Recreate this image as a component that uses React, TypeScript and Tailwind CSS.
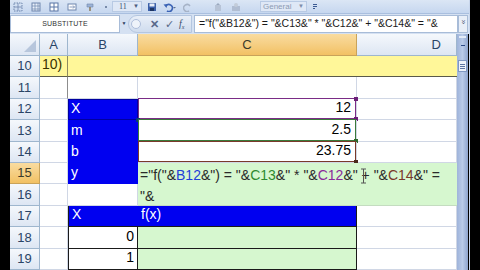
import React from 'react';

const font = { fontFamily: '"Liberation Sans", Arial, sans-serif' };

const hdr =
  'flex items-center justify-center border-r border-b border-[#9eb6ce] bg-linear-to-b from-[#f5f8fc] to-[#dde6f3] text-[13px] text-[#2a4466]';
const hdrOn =
  'flex items-center justify-center border-r border-b border-[#c9a35a] bg-linear-to-b from-[#f9dca0] to-[#f2c163] text-[13px] text-[#3b3b2a]';
const cell = 'flex items-end px-[3px] pb-[1px] border-r border-b border-[#d0d7e5] bg-white text-[14px] text-black';

const ToolIcon: React.FC<{ children: React.ReactNode; w?: number }> = ({ children, w = 10 }) => (
  <svg width={w} height="10" viewBox={`0 0 ${w} 10`} className="shrink-0">
    {children}
  </svg>
);

const Toolbar: React.FC = () => (
  <div className="h-[14px] flex items-center bg-linear-to-b from-[#dbe6f5] to-[#c6d7ef] border-b border-[#a9bfdf]">
    <div className="w-[2px]" />
    <div className="flex items-center gap-[8px] pl-[1px]">
      <ToolIcon>
        <rect x="1" y="1" width="8" height="8" fill="none" stroke="#6e86ad" strokeDasharray="1.5 1" />
        <path d="M5 1v8M1 5h8" stroke="#6e86ad" strokeWidth="0.8" />
      </ToolIcon>
      <ToolIcon>
        <rect x="1" y="1" width="8" height="8" fill="#eaf0fa" stroke="#6e86ad" />
        <path d="M4 1v8M7 1v8M1 4h8M1 7h8" stroke="#6e86ad" strokeWidth="0.7" />
      </ToolIcon>
      <ToolIcon>
        <rect x="1" y="1" width="8" height="8" fill="#fff" stroke="#5b76a6" />
        <path d="M5 1v8M1 5h8" stroke="#5b76a6" strokeWidth="1" />
      </ToolIcon>
      <ToolIcon>
        <rect x="1" y="2" width="8" height="6" fill="#fff" stroke="#6e86ad" />
        <path d="M2.5 5h5M6 3.5l1.5 1.5L6 6.5" stroke="#6e86ad" strokeWidth="0.8" fill="none" />
      </ToolIcon>
      <ToolIcon>
        <path d="M2 2h6v3H2z" fill="#9cb3d6" stroke="#6e86ad" strokeWidth="0.6" />
        <path d="M5 5v4" stroke="#8a7a5a" strokeWidth="1.5" />
      </ToolIcon>
      <ToolIcon w={6}>
        <circle cx="3" cy="5" r="1" fill="#5b6f90" />
      </ToolIcon>
    </div>
    <div className="ml-[3px] w-[30px] h-[11px] flex items-center justify-between pl-[6px] pr-[2px] bg-[#dfe8f6] border border-[#b8cae4] text-[8px] text-[#3c4f70]">
      <span className="font-['Liberation_Serif']">11</span>
      <span className="text-[6px] text-[#4a5d80]">▼</span>
    </div>
    <div className="ml-[5px] flex items-center gap-[6px]">
      <ToolIcon>
        <rect x="1" y="1" width="8" height="8" rx="0.5" fill="#3a5fa8" />
        <rect x="2.5" y="1.5" width="5" height="3" fill="#e8eef8" />
        <rect x="3" y="6" width="4" height="3" fill="#1d3563" />
      </ToolIcon>
      <ToolIcon w={14}>
        <path d="M3 4 a3.5 3.5 0 1 1 1 5" fill="none" stroke="#3b63b5" strokeWidth="1.6" />
        <path d="M0.5 2.5 L4.5 2 L3.5 6 Z" fill="#3b63b5" />
        <path d="M10 5 l1.5 1.5 l1.5 -1.5" fill="#5b6f90" />
      </ToolIcon>
      <ToolIcon>
        <path d="M7 4 a3.5 3.5 0 1 0 -1 5" fill="none" stroke="#a6b3c7" strokeWidth="1.5" />
      </ToolIcon>
    </div>
    <div className="ml-[20px] flex items-center gap-[8px]">
      <ToolIcon>
        <rect x="2" y="3" width="6" height="6" fill="#b7c3d6" />
        <path d="M3 3 l2 -2 l2 2" fill="#9aa8be" />
      </ToolIcon>
      <ToolIcon>
        <rect x="1" y="4" width="8" height="5" fill="#b0bdd2" />
        <circle cx="5" cy="3" r="2" fill="#c3ccd9" />
      </ToolIcon>
    </div>
    <div className="ml-[19px] w-[47px] h-[11px] flex items-center justify-between pl-[2px] pr-[2px] bg-[#dfe8f6] border border-[#b8cae4] text-[8px] text-[#8c9ab2]">
      <span>General</span>
      <span className="text-[6px] text-[#7d8daa]">▼</span>
    </div>
    <div className="ml-[6px] flex flex-col gap-[1px]">
      <div className="w-[4px] h-[1px] bg-[#3c5a92]" />
      <div className="w-[4px] h-[1px] bg-[#3c5a92]" />
      <div className="w-[2px] h-[1px] bg-[#3c5a92]" />
    </div>
  </div>
);

const FormulaBar: React.FC = () => (
  <div className="h-[20px] flex items-center bg-[#d5e1f2]">
    <div className="w-[110px] h-[18px] ml-0 flex items-center justify-center bg-white border border-[#a8bcd8] text-[7px] text-[#303030] tracking-[0.2px]">
      SUBSTITUTE
    </div>
    <div className="w-[8px] flex justify-center text-[5px] text-[#2d3d5c]">▼</div>
    <div className="w-[64px] h-[18px] flex items-center rounded-l-[9px] bg-linear-to-b from-[#e9eff8] to-[#cfdcee] border border-[#b4c6e0]">
      <div className="w-[10px] h-[10px] ml-[2px] rounded-full border border-[#aebedb] bg-[#eef3fa]" />
      <span className="ml-[9px] text-[11px] leading-none text-[#58698a] font-bold">✕</span>
      <span className="ml-[6px] text-[11px] leading-none text-[#58698a]">✓</span>
      <span className="ml-[5px] text-[10px] leading-none italic text-[#3e4e6c] font-['Liberation_Serif']">
        f<sub className="text-[6px]">x</sub>
      </span>
    </div>
    <div className="flex-1 h-[18px] ml-[2px] flex items-center pl-[4px] bg-white border border-[#a8bcd8] text-[10.5px] text-[#1a1a1a] whitespace-nowrap overflow-hidden">
      ="f("&amp;B12&amp;") = "&amp;C13&amp;" * "&amp;C12&amp;" + "&amp;C14&amp;" = "&amp;
    </div>
    <div className="w-[10px] h-[18px] flex items-start justify-center bg-[#e9eff8] border border-[#a8bcd8] text-[8px] leading-[12px] text-[#3e4e6c]">
      <span className="rotate-90 inline-block">»</span>
    </div>
    <div className="w-[1px]" />
  </div>
);

const Ref: React.FC<{ color: string; dot?: string }> = ({ color, dot }) => (
  <>
    <div className="absolute inset-x-0 -top-px -bottom-0 border pointer-events-none" style={{ borderColor: color }} />
    {dot && (
      <div className="absolute -right-[2px] -bottom-[2px] w-[4px] h-[4px]" style={{ background: dot }} />
    )}
  </>
);

const Grid: React.FC = () => (
  <div className="grid grid-cols-[30px_28px_70px_219px_100px] grid-rows-[22px_repeat(10,21.4px)] bg-white">
    {/* headers */}
    <div className={`${hdr} relative`}>
      <svg width="12" height="12" viewBox="0 0 12 12" className="absolute right-[3px] bottom-[3px]">
        <path d="M12 0 L12 12 L0 12 Z" fill="#b7c6dc" />
      </svg>
    </div>
    <div className={hdr}>A</div>
    <div className={hdr}>B</div>
    <div className={hdrOn}>C</div>
    <div className={`${hdr} justify-end pr-[15px]`}>D</div>

    {/* 10 */}
    <div className={hdr}>10</div>
    <div className="flex items-end px-[2px] pb-[1px] bg-[#fff799] border-r border-b border-r-[#8d8a60] border-b-[#5a5a4a] text-[14px] text-[#3a3200]">10)</div>
    <div className="bg-[#fff799] border-b border-[#5a5a4a]" />
    <div className="bg-[#fff799] border-b border-[#5a5a4a]" />
    <div className="bg-[#fff799] border-b border-[#5a5a4a]" />

    {/* 11 */}
    <div className={hdr}>11</div>
    <div className={`${cell} border-r-[#8d8d8d]`} />
    <div className={cell} />
    <div className={cell} />
    <div className={cell} />

    {/* 12 */}
    <div className={hdr}>12</div>
    <div className={cell} />
    <div className="flex items-end px-[3px] pb-[1px] bg-[#0000f0] text-[14px] text-white relative">
      X
      <div className="absolute inset-0 border border-[#0000a0] pointer-events-none" />
    </div>
    <div className={`${cell} justify-end relative`}>
      <span className="pr-[2px]">12</span>
      <Ref color="#7a2c86" dot="#6b1f78" />
      <div className="absolute -right-[2px] -top-[2px] w-[4px] h-[4px] bg-[#6b1f78]" />
    </div>
    <div className={cell} />

    {/* 13 */}
    <div className={hdr}>13</div>
    <div className={cell} />
    <div className="flex items-end px-[3px] pb-[1px] bg-[#0000f0] text-[14px] text-white relative">
      m
      <div className="absolute -right-[2px] -top-[2px] w-[4px] h-[4px] bg-[#0a3a7a]" />
    </div>
    <div className={`${cell} justify-end relative`}>
      <span className="pr-[2px]">2.5</span>
      <Ref color="#3a7a3a" dot="#2f6a2f" />
    </div>
    <div className={cell} />

    {/* 14 */}
    <div className={hdr}>14</div>
    <div className={cell} />
    <div className="flex items-end px-[3px] pb-[1px] bg-[#0000f0] text-[14px] text-white">b</div>
    <div className={`${cell} justify-end relative`}>
      <span className="pr-[2px]">23.75</span>
      <Ref color="#7a3a2a" dot="#4a2a1a" />
    </div>
    <div className={cell} />

    {/* 15 */}
    <div className={hdrOn}>15</div>
    <div className={cell} />
    <div className="flex items-end px-[3px] pb-[1px] bg-[#0000f0] text-[14px] text-white">y</div>
    <div className="col-span-2 row-span-2 relative bg-[#d6f7cf] border-b border-[#c4dcc0] pl-[2px] pt-[2px] pr-[6px] text-[14px] leading-[21.4px] text-[#2a2a2a]">
      <div className="whitespace-nowrap">
        ="f("&amp;<span className="text-[#1f3fd8]">B12</span>&amp;") = "&amp;
        <span className="text-[#2f8a2f]">C13</span>&amp;" * "&amp;
        <span className="text-[#8a2a9a]">C12</span>&amp;" + "&amp;
        <span className="text-[#7a3a2a]">C14</span>&amp;" =
      </div>
      <div>"&amp;</div>
      <svg width="7" height="16" viewBox="0 0 7 16" className="absolute left-[222px] top-[5px]">
        <path d="M1 1h5M3.5 1v14M1 15h5" stroke="#555" strokeWidth="1" fill="none" />
      </svg>
    </div>

    {/* 16 */}
    <div className={hdr}>16</div>
    <div className={cell} />
    <div className={cell} />

    {/* 17 */}
    <div className={hdr}>17</div>
    <div className={cell} />
    <div className="flex items-end px-[3px] pb-[1px] bg-[#0000f0] border-l border-b border-[#1a1a1a] text-[14px] text-white">X</div>
    <div className="flex items-end px-[3px] pb-[1px] bg-[#0000f0] border-r border-b border-[#1a1a1a] text-[14px] text-white">f(x)</div>
    <div className={cell} />

    {/* 18 */}
    <div className={hdr}>18</div>
    <div className={cell} />
    <div className="flex items-end justify-end px-[3px] pb-[1px] bg-white border-l border-r border-b border-[#1a1a1a] text-[14px] text-black">0</div>
    <div className="bg-[#d6f7cf] border-r border-b border-[#1a1a1a]" />
    <div className={cell} />

    {/* 19 */}
    <div className={hdr}>19</div>
    <div className={cell} />
    <div className="flex items-end justify-end px-[3px] pb-[1px] bg-white border-l border-r border-b border-[#1a1a1a] text-[14px] text-black">1</div>
    <div className="bg-[#d6f7cf] border-r border-b border-[#1a1a1a]" />
    <div className={cell} />
  </div>
);

const Scrollbar: React.FC = () => (
  <div className="w-[11px] flex flex-col bg-linear-to-r from-[#9fb4da] via-[#b9cbe9] to-[#8ea5cf]">
    <div className="h-[6px] flex items-center justify-center">
      <div className="w-[7px] h-[2px] bg-[#e4ecf8]" />
    </div>
    <div className="h-[10px] flex items-center justify-center">
      <div className="w-[4px] h-[1px] bg-[#2b4a86]" />
    </div>
    <div className="h-[10px]" />
    <div className="mx-[1px] h-[12px] flex flex-col items-center justify-center gap-[1px] bg-[#eef3fb] border border-[#7f97c2]">
      <div className="w-[5px] h-[1px] bg-[#5d75a3]" />
      <div className="w-[5px] h-[1px] bg-[#5d75a3]" />
      <div className="w-[5px] h-[1px] bg-[#5d75a3]" />
    </div>
    <div className="flex-1" />
  </div>
);

export default function App() {
  return (
    <div className="w-[480px] h-[270px] bg-black flex overflow-hidden" style={font}>
      <div className="w-[10px] shrink-0" />
      <div className="w-[459px] shrink-0 flex flex-col">
        <Toolbar />
        <FormulaBar />
        <div className="flex flex-1 overflow-hidden">
          <Grid />
          <Scrollbar />
        </div>
      </div>
      <div className="flex-1 border-l border-[#c8d6ec]" />
    </div>
  );
}
